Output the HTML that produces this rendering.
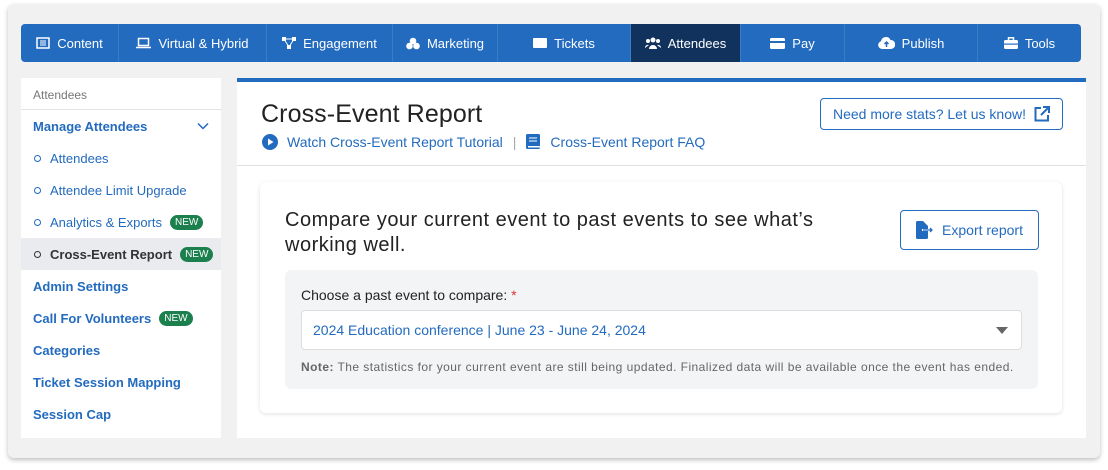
<!DOCTYPE html>
<html><head><meta charset="utf-8"><style>
*{box-sizing:border-box;margin:0;padding:0}
body{width:1108px;height:470px;background:#fff;font-family:"Liberation Sans",Helvetica,Arial,sans-serif;position:relative;overflow:hidden}
.frame{position:absolute;left:8px;top:4px;width:1092px;height:454px;background:#f1f1f1;border-radius:6px;box-shadow:0 2px 5px rgba(0,0,0,.25)}
.nav{position:absolute;left:21px;top:24px;width:1060px;height:38px;background:#236bbf;border-radius:4px;display:flex;overflow:hidden}
.nav div{height:38px;display:flex;align-items:center;justify-content:center;color:#fff;font-size:13px;border-right:1px solid #3a7cc8;gap:7px}
.nav div:last-child{border-right:none}
.nav .act{background:#12325e}
.side{position:absolute;left:21px;top:78px;width:200px;height:360px;background:#fff}
.side .hd{height:32px;border-bottom:1px solid #e3e3e3;font-size:12px;color:#777;padding:10px 12px}
.si{height:32px;display:flex;align-items:center;font-size:13px;color:#236bbf;padding-left:12px;font-weight:bold}
.si.sub{font-weight:normal;padding-left:13px}
.si.sub:before{content:"";width:5px;height:5px;border:1px solid #236bbf;border-radius:50%;margin-right:9px}
.si.cur{background:#e9ebef;color:#333;font-weight:bold}
.si.cur:before{border-color:#333}
.new{background:#1b7f4e;color:#fff;font-size:10px;font-weight:normal;border-radius:8px;padding:2px 5px;margin-left:8px}
.main{position:absolute;left:237px;top:78px;width:849px;height:360px;background:#fff;border-top:4px solid #236bbf}
.hdr{height:84px;border-bottom:1px solid #e0e0e0;position:relative}
h1{position:absolute;left:24px;top:18px;font-size:25px;font-weight:normal;color:#222;letter-spacing:.1px}
.links{position:absolute;left:25px;top:52px;font-size:14px;color:#236bbf;display:flex;align-items:center}
.btn{position:absolute;border:1px solid #236bbf;border-radius:4px;color:#236bbf;font-size:14px;display:flex;align-items:center;justify-content:center;gap:8px}
.card{position:absolute;left:23px;top:100px;width:802px;height:231px;background:#fff;border-radius:6px;box-shadow:0 1px 4px rgba(0,0,0,.12)}
.card h2{position:absolute;left:25px;top:26px;width:560px;font-size:20px;font-weight:normal;color:#222;line-height:25px;letter-spacing:.5px}
.gbox{position:absolute;left:25px;top:88px;width:753px;height:119px;background:#f3f4f6;border-radius:6px}
.sel{position:absolute;left:16px;top:40px;width:721px;height:40px;background:#fff;border:1px solid #ddd;border-radius:4px;color:#236bbf;font-size:14px;padding:11px 11px}
</style></head><body>
<div class="frame"></div>
<div class="nav">
<div style="width:98px"><svg width="14" height="12"><rect x="1" y="1" width="12" height="10" fill="none" stroke="#fff" stroke-width="1.5"/><path d="M4 4h6M4 6h6M4 8h6" stroke="#fff"/></svg>Content</div>
<div style="width:148px"><svg width="15" height="12"><rect x="2.5" y="1.5" width="10" height="7" fill="none" stroke="#fff" stroke-width="1.5"/><path d="M0 10.5h15" stroke="#fff" stroke-width="1.5"/></svg>Virtual &amp; Hybrid</div>
<div style="width:126px"><svg width="14" height="12"><rect x="0" y="0" width="4" height="4" fill="#fff"/><rect x="10" y="0" width="4" height="4" fill="#fff"/><rect x="5" y="8" width="4" height="4" fill="#fff"/><path d="M2 2h10M2 2l5 8M12 2l-5 8" stroke="#fff"/></svg>Engagement</div>
<div style="width:105px"><svg width="14" height="13"><circle cx="7" cy="4" r="3.3" fill="#fff"/><circle cx="3.5" cy="9" r="3.3" fill="#fff"/><circle cx="10.5" cy="9" r="3.3" fill="#fff"/></svg>Marketing</div>
<div style="width:133px"><svg width="14" height="10"><rect width="14" height="10" rx="1" fill="#fff"/></svg>Tickets</div>
<div class="act" style="width:110px"><svg width="16" height="12"><circle cx="8" cy="3" r="2.5" fill="#fff"/><circle cx="3" cy="4" r="2" fill="#fff"/><circle cx="13" cy="4" r="2" fill="#fff"/><path d="M4 12a4 4 0 0 1 8 0zM0 11a3 3 0 0 1 4-3zM16 11a3 3 0 0 0-4-3z" fill="#fff"/></svg>Attendees</div>
<div style="width:104px"><svg width="15" height="11"><rect width="15" height="11" rx="1.5" fill="#fff"/><rect y="3" width="15" height="2" fill="#236bbf"/></svg>Pay</div>
<div style="width:133px"><svg width="17" height="12"><path d="M4 12a4 4 0 0 1-1-7.8A5 5 0 0 1 12.5 3 4.5 4.5 0 0 1 13 12z" fill="#fff"/><path d="M8.5 10V5M6.5 7l2-2 2 2" stroke="#236bbf" stroke-width="1.5" fill="none"/></svg>Publish</div>
<div style="width:103px"><svg width="14" height="12"><rect y="3" width="14" height="9" rx="1.5" fill="#fff"/><rect x="4.5" y="0.8" width="5" height="3" fill="none" stroke="#fff" stroke-width="1.5"/><rect y="6.5" width="14" height="1.2" fill="#236bbf"/></svg>Tools</div>
</div>
<div class="side">
<div class="hd">Attendees</div>
<div class="si" style="justify-content:space-between;padding-right:12px">Manage Attendees<svg width="12" height="8"><path d="M1 1.5l5 5 5-5" stroke="#236bbf" stroke-width="1.5" fill="none"/></svg></div>
<div class="si sub">Attendees</div>
<div class="si sub">Attendee Limit Upgrade</div>
<div class="si sub">Analytics &amp; Exports<span class="new">NEW</span></div>
<div class="si sub cur">Cross-Event Report<span class="new">NEW</span></div>
<div class="si">Admin Settings</div>
<div class="si">Call For Volunteers<span class="new">NEW</span></div>
<div class="si">Categories</div>
<div class="si">Ticket Session Mapping</div>
<div class="si">Session Cap</div>
</div>
<div class="main">
<div class="hdr">
<h1>Cross-Event Report</h1>
<div class="links"><svg width="16" height="16" style="margin-right:9px"><circle cx="8" cy="8" r="8" fill="#236bbf"/><path d="M6 4.5v7l5.5-3.5z" fill="#fff"/></svg>Watch Cross-Event Report Tutorial<span style="color:#aaa;margin:0 10px">|</span><svg width="14" height="16" style="margin-right:10px"><rect x="0" y="0" width="14" height="15" rx="1.5" fill="#236bbf"/><path d="M3 4h8M3 7h8" stroke="#fff"/><rect x="2" y="12" width="12" height="1.5" fill="#fff"/></svg>Cross-Event Report FAQ</div>
<div class="btn" style="left:583px;top:16px;width:243px;height:32px">Need more stats? Let us know!<svg width="16" height="16"><path d="M7 2H1.5v12.5H14V9" stroke="#236bbf" stroke-width="2" fill="none"/><path d="M9 1h6v6M15 1L7 9" stroke="#236bbf" stroke-width="2" fill="none"/></svg></div>
</div>
<div class="card">
<h2>Compare your current event to past events to see what’s working well.</h2>
<div class="btn" style="left:640px;top:28px;width:139px;height:40px"><svg width="18" height="18"><path d="M0 1.5a1.5 1.5 0 0 1 1.5-1.5H7l5 5v3H6v2h6v6.5a1.5 1.5 0 0 1-1.5 1.5h-9A1.5 1.5 0 0 1 0 16.5z" fill="#236bbf"/><path d="M7 9h9M14 7l2 2-2 2" stroke="#236bbf" stroke-width="1.3" fill="none"/></svg>Export report</div>
<div class="gbox">
<div style="position:absolute;left:16px;top:17px;font-size:14px;color:#222">Choose a past event to compare: <span style="color:#d33">*</span></div>
<div class="sel">2024 Education conference | June 23 - June 24, 2024<svg width="12" height="7" style="position:absolute;right:13px;top:16px"><path d="M0 0h12L6 7z" fill="#666"/></svg></div>
<div style="position:absolute;left:16px;top:90px;font-size:12px;color:#666;letter-spacing:.45px;white-space:nowrap"><b>Note:</b> The statistics for your current event are still being updated. Finalized data will be available once the event has ended.</div>
</div>
</div>
</div>
</body></html>
